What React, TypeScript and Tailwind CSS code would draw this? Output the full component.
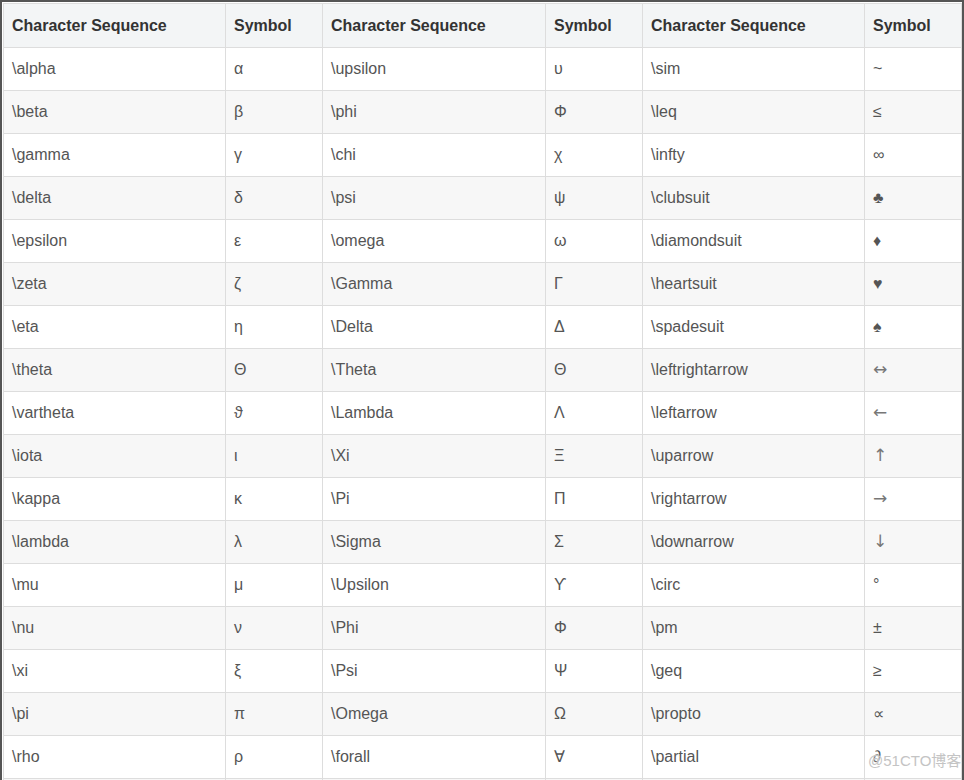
import React from "react"

type Row = [string, string, string, string, string, string]

const rows: Row[] = [
  ["\\alpha", "α", "\\upsilon", "υ", "\\sim", "~"],
  ["\\beta", "β", "\\phi", "Φ", "\\leq", "≤"],
  ["\\gamma", "γ", "\\chi", "χ", "\\infty", "∞"],
  ["\\delta", "δ", "\\psi", "ψ", "\\clubsuit", "♣"],
  ["\\epsilon", "ε", "\\omega", "ω", "\\diamondsuit", "♦"],
  ["\\zeta", "ζ", "\\Gamma", "Γ", "\\heartsuit", "♥"],
  ["\\eta", "η", "\\Delta", "Δ", "\\spadesuit", "♠"],
  ["\\theta", "Θ", "\\Theta", "Θ", "\\leftrightarrow", "↔"],
  ["\\vartheta", "ϑ", "\\Lambda", "Λ", "\\leftarrow", "←"],
  ["\\iota", "ι", "\\Xi", "Ξ", "\\uparrow", "↑"],
  ["\\kappa", "κ", "\\Pi", "Π", "\\rightarrow", "→"],
  ["\\lambda", "λ", "\\Sigma", "Σ", "\\downarrow", "↓"],
  ["\\mu", "μ", "\\Upsilon", "ϒ", "\\circ", "°"],
  ["\\nu", "ν", "\\Phi", "Φ", "\\pm", "±"],
  ["\\xi", "ξ", "\\Psi", "Ψ", "\\geq", "≥"],
  ["\\pi", "π", "\\Omega", "Ω", "\\propto", "∝"],
  ["\\rho", "ρ", "\\forall", "∀", "\\partial", "∂"],
  ["", "", "", "", "", ""],
]

const arrows = ["↔", "←", "↑", "→", "↓"]

const headers = ["Character Sequence", "Symbol", "Character Sequence", "Symbol", "Character Sequence", "Symbol"]
const widths = ["w-[222px]", "w-[97px]", "w-[223px]", "w-[97px]", "w-[222px]", "w-[97px]"]

export default function App() {
  return (
    <div className="w-[964px] h-[780px] overflow-hidden bg-white font-['Liberation_Sans',Arial,sans-serif] relative">
      <div className="w-[964px] border-l-2 border-t-2 border-r-2 border-[#555] pl-px pt-px">
        <table className="table-fixed border-collapse w-[959px] text-[16px]">
          <colgroup>
            {widths.map((w, i) => (
              <col key={i} className={w} />
            ))}
          </colgroup>
          <thead>
            <tr className="h-[44px] bg-[#f3f5f6]">
              {headers.map((h, i) => (
                <th key={i} className="border border-[#dddddd] px-[8px] text-left font-bold text-[#333]">
                  {h}
                </th>
              ))}
            </tr>
          </thead>
          <tbody>
            {rows.map((r, ri) => (
              <tr key={ri} className={ri % 2 === 1 ? "h-[43px] bg-[#f7f7f7]" : "h-[43px] bg-white"}>
                {r.map((c, ci) => (
                  <td
                    key={ci}
                    className={
                      arrows.includes(c)
                        ? "border border-[#dddddd] px-[8px] text-[#777] font-['DejaVu_Sans',sans-serif] text-[17px]"
                        : "border border-[#dddddd] px-[8px] text-[#555]"
                    }
                  >
                    {c}
                  </td>
                ))}
              </tr>
            ))}
          </tbody>
        </table>
      </div>
      <div className="absolute left-[868px] top-[750px] text-[15px] text-[#c4c4c4] font-['Liberation_Sans','Noto_Sans_CJK_SC',sans-serif] [text-shadow:0_0_2px_#fff]">
        @51CTO博客
      </div>
    </div>
  )
}
